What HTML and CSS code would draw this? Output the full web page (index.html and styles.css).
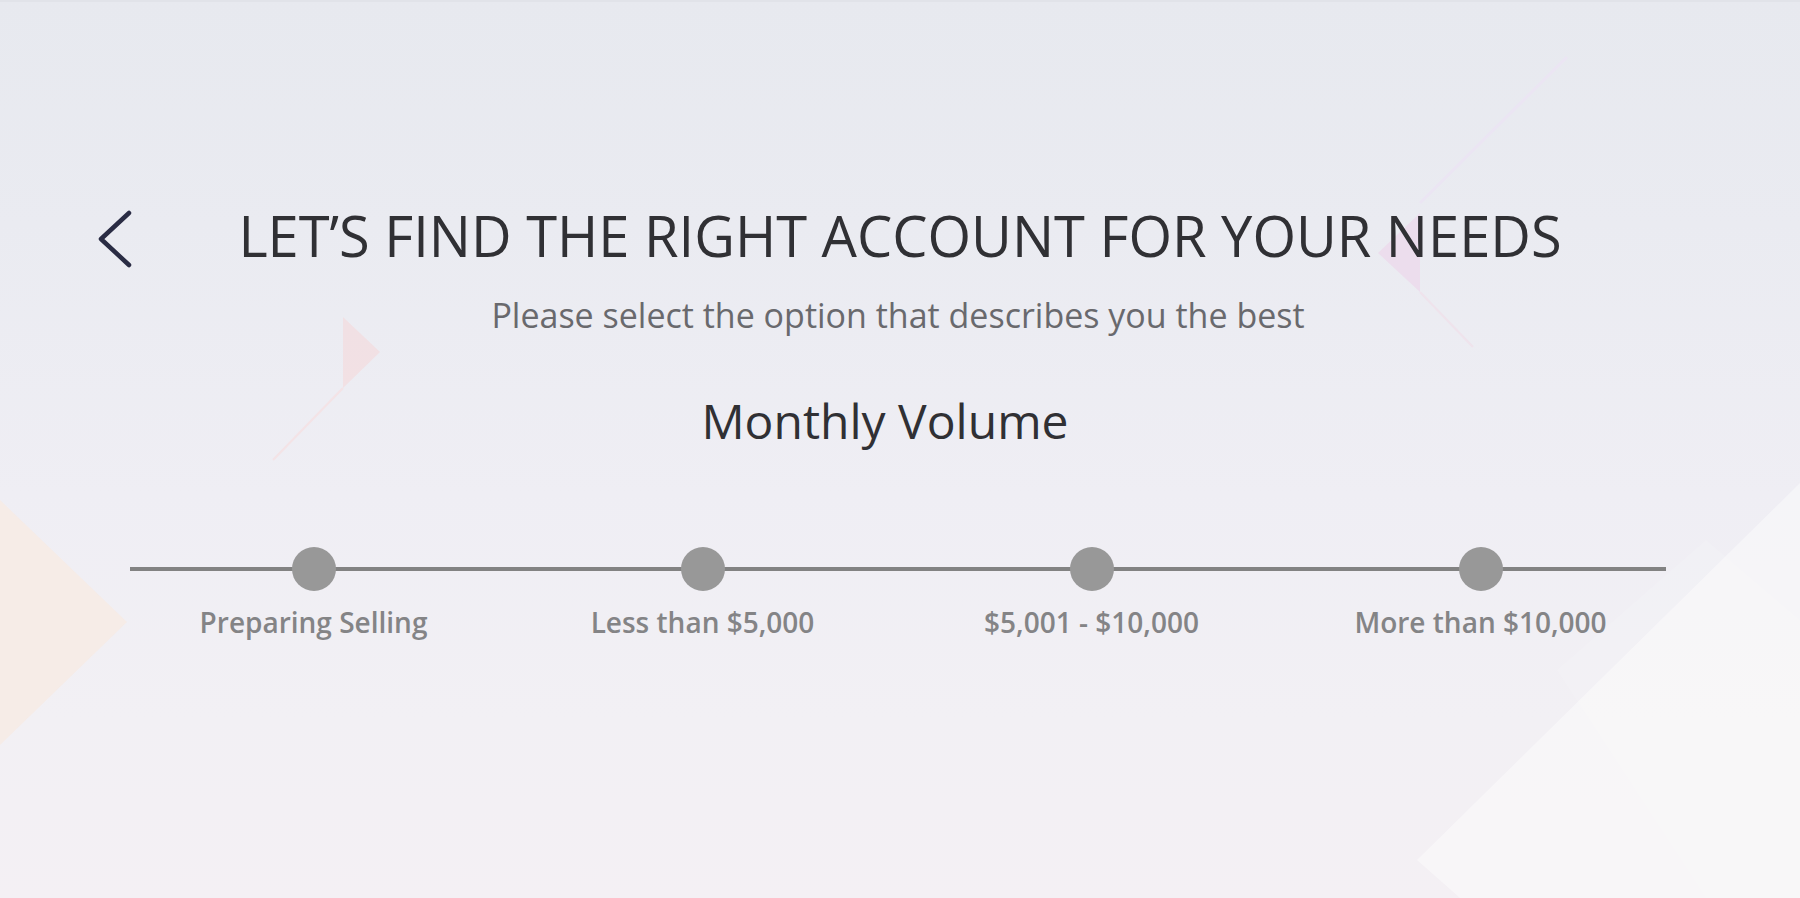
FILE: index.html
```html
<!DOCTYPE html>
<html lang="en">
<head>
<meta charset="utf-8">
<title>Let's find the right account</title>
<link rel="stylesheet" href="styles.css">
</head>
<body>
<div class="page">
  <svg class="decor" width="1800" height="898" viewBox="0 0 1800 898" aria-hidden="true">
    <polygon points="343,317 380,352 343,388" fill="#f2dfe2" opacity="0.9"/>
    <line x1="343" y1="388" x2="273" y2="460" stroke="#f4e3e6" stroke-width="2"/>
    <polygon points="0,500 127,622 0,745" fill="#f6ebe6" opacity="0.9"/>
    <polygon points="1420,213 1378,253 1420,292" fill="#ecdbec" opacity="0.9"/>
    <line x1="1420" y1="203" x2="1567" y2="57" stroke="#ebe5f3" stroke-width="3"/>
    <line x1="1420" y1="292" x2="1473" y2="347" stroke="#efe3ec" stroke-width="2"/>
    <polygon points="1417,860 1800,483 1800,898 1460,898" fill="#ffffff" opacity="0.4"/>
    <polygon points="1557,670 1706,540 1800,620 1800,898 1706,898" fill="#ffffff" opacity="0.12"/>
  </svg>

  <main class="content">
    <header class="head">
      <button class="back" type="button" aria-label="Back">
        <svg class="chev" width="34" height="58" viewBox="0 0 34 58">
          <path d="M31 7 L3 33 L31 59" fill="none" stroke="#2a2c44" stroke-width="4.5" stroke-linecap="round" stroke-linejoin="round"/>
        </svg>
      </button>
      <h1 class="title">LET’S FIND THE RIGHT ACCOUNT FOR YOUR NEEDS</h1>
      <span class="spacer"></span>
    </header>
    <p class="subtitle">Please select the option that describes you the best</p>
    <h2 class="question">Monthly Volume</h2>

    <div class="slider">
      <div class="track"></div>
      <div class="option"><span class="knob"></span><span class="label">Preparing Selling</span></div>
      <div class="option"><span class="knob"></span><span class="label">Less than $5,000</span></div>
      <div class="option"><span class="knob"></span><span class="label">$5,001 - $10,000</span></div>
      <div class="option"><span class="knob"></span><span class="label">More than $10,000</span></div>
    </div>
  </main>
</div>
</body>
</html>
```

FILE: styles.css
```css
* { box-sizing: border-box; }

html, body {
  margin: 0;
  padding: 0;
}

body {
  width: 1800px;
  height: 898px;
  overflow: hidden;
  font-family: "Open Sans", "Noto Sans", "Liberation Sans", sans-serif;
  background: linear-gradient(180deg, #e7e9ef 0%, #eaebf1 25%, #efeef4 55%, #f2f0f4 80%, #f4f0f4 100%);
}

.page {
  position: relative;
  width: 1800px;
  height: 898px;
  border-top: 2px solid #e1e3e9;
}

.decor {
  position: absolute;
  left: 0;
  top: -2px;
  pointer-events: none;
}

.content {
  position: relative;
  display: flex;
  flex-direction: column;
  padding-top: 204px;
}

.head {
  display: grid;
  grid-template-columns: 1fr auto 1fr;
  align-items: center;
  padding-left: 98px;
}

.back {
  justify-self: start;
  width: 34px;
  height: 58px;
  padding: 0;
  border: 0;
  background: none;
  cursor: pointer;
  display: block;
}

.chev {
  display: block;
  width: 34px;
  height: 58px;
  overflow: visible;
}

.title {
  margin: 0 0 0 -98px;
  font-size: 56px;
  line-height: 1;
  font-weight: 400;
  color: #303034;
  white-space: nowrap;
}

.subtitle {
  margin: 34px 0 0;
  padding-right: 4px;
  text-align: center;
  font-size: 34px;
  line-height: 1;
  color: #69696d;
}

.question {
  margin: 65px 0 0;
  padding-right: 30px;
  text-align: center;
  font-size: 48px;
  line-height: 1;
  font-weight: 400;
  color: #303034;
}

.slider {
  position: relative;
  margin: 102px 0 0 119px;
  width: 1556px;
  display: grid;
  grid-template-columns: repeat(4, 1fr);
}

.track {
  position: absolute;
  left: 11px;
  right: 9px;
  top: 20px;
  height: 4px;
  background: #828282;
}

.option {
  position: relative;
  display: flex;
  flex-direction: column;
  align-items: center;
  gap: 17px;
}

.knob {
  width: 44px;
  height: 44px;
  border-radius: 50%;
  background: #989898;
}

.label {
  font-size: 28px;
  line-height: 1;
  font-weight: 600;
  color: #848486;
  white-space: nowrap;
}
```
